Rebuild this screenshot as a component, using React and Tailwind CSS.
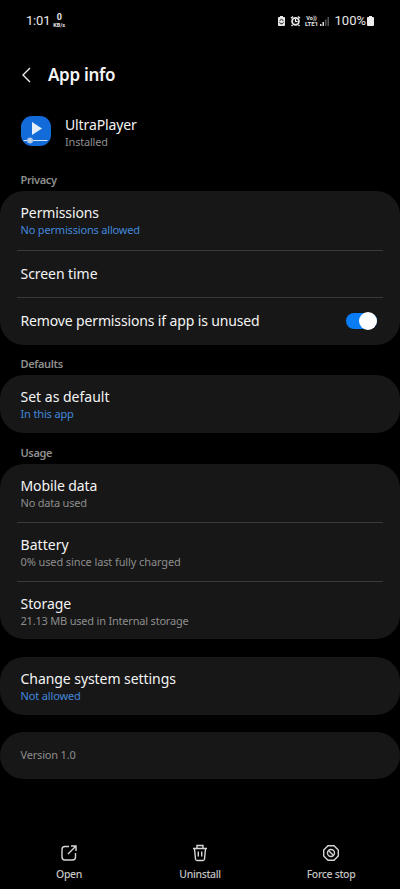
import React from 'react';

function Row({ title, sub, blue, height, tracking = 'tracking-[-0.06px]', subTracking = 'tracking-[-0.15px]', children }) {
  return (
    <div className={`flex items-center justify-between pl-[20.5px] pr-[23px] ${sub ? 'pt-[1px]' : ''} ${height}`}>
      <div className="whitespace-nowrap">
        <div className={`text-[14px] leading-[19px] text-[#f4f4f4] ${tracking}`}>{title}</div>
        {sub && <div className={`text-[11px] leading-[16px] ${blue ? 'text-[#4287dc]' : 'text-[#8d8d8d]'} ${subTracking}`}>{sub}</div>}
      </div>
      {children}
    </div>
  );
}

function Divider() {
  return <div className="mx-[17px] h-px shrink-0 bg-[#383838]" />;
}

function Card({ children, className }) {
  return <section className={`shrink-0 rounded-[24px] bg-[#171717] ${className}`}>{children}</section>;
}

function Heading({ children, className = 'h-[31px] pt-[12px]' }) {
  return <h2 className={`shrink-0 pl-[20.5px] text-[11px] font-semibold leading-[16px] tracking-[-0.35px] text-[#8e8e8e] ${className}`}>{children}</h2>;
}

function Action({ label, children, className }) {
  return (
    <button className={`flex flex-col items-center ${className}`}>
      <svg width="18" height="18" viewBox="0 0 18 18" fill="none" stroke="#d6d6d6" strokeWidth="1.4">{children}</svg>
      <span className="mt-[4px] whitespace-nowrap text-[10.5px] font-medium leading-[16px] tracking-[-0.35px] text-[#c4c4c4]">{label}</span>
    </button>
  );
}

export default function App() {
  return (
    <main className="flex h-[889px] w-[400px] flex-col overflow-hidden bg-black font-['Noto_Sans','Open_Sans',sans-serif]">
      <header className="flex h-[40px] shrink-0 items-center justify-between pl-[26px] pr-[26px] pt-[1px] font-[Roboto,sans-serif] text-[#e8e8e8]">
        <div className="flex items-center gap-[3px]">
          <span className="text-[13px] leading-[16px] tracking-[-0.2px]">1:01</span>
          <span className="flex flex-col items-center font-bold">
            <span className="text-[9px] leading-[9px]">0</span>
            <span className="text-[5.5px] leading-[6px]">KB/s</span>
          </span>
        </div>
        <div className="flex items-center">
          <svg width="9" height="12" viewBox="0 0 9 12" fill="#e8e8e8">
            <path d="M3 1h3v1h1.200q.8 0 .8.8v7.400q0 .8-.8.8H1.800q-.8 0-.8-.8V2.800Q1 2 1.800 2H3z" />
            <path d="M2.600 6.100 4.500 3.900 6.400 6.100M2.500 7.200 3.500 8.700H5.500L6.500 7.200" fill="none" stroke="#111" strokeWidth=".9" />
          </svg>
          <svg className="ml-[4px]" width="11" height="12" viewBox="0 0 11 12" fill="none">
            <path d="M1 3.200 3 1.500M10 3.200 8 1.500M2.500 10 1.500 11M8.500 10 9.500 11" stroke="#e8e8e8" strokeWidth="1.500" />
            <circle cx="5.500" cy="6.300" r="3.500" fill="#222" stroke="#e8e8e8" strokeWidth="1.700" />
            <path d="M5.500 4v2.500h2" stroke="#fff" />
          </svg>
          <span className="ml-[4px] flex w-[14px] flex-col items-center whitespace-nowrap font-bold">
            <span className="text-[5.5px] leading-[6px]">Vo))</span>
            <span className="text-[6px] leading-[6px]">LTE1</span>
          </span>
          <svg className="ml-[1px]" width="10" height="12" viewBox="0 0 10 12" fill="#ddd">
            <path d="M0 9h1.500v2H0zM2.500 7H4v4H2.500z" />
            <path d="M5 4.500h1.500V11H5zM7.500 2H9v9H7.500z" fill="#555" />
          </svg>
          <span className="ml-[5px] text-[13px] leading-[16px]">100%</span>
          <svg className="ml-[1px]" width="7" height="12" viewBox="0 0 7 12" fill="#eee">
            <path d="M2 1h3v1h1q1 0 1 1v7q0 1-1 1H1q-1 0-1-1V3q0-1 1-1h1z" />
          </svg>
        </div>
      </header>

      <div className="flex h-[70px] shrink-0 items-center pl-[21px]">
        <svg width="11" height="17" viewBox="0 0 11 17" fill="none" stroke="#eee" strokeWidth="1.400"><path d="M9 1 2 8l7 7" /></svg>
        <h1 className="ml-[16px] text-[17px] font-semibold leading-[24px] tracking-[-0.3px] text-[#f4f4f4]">App info</h1>
      </div>

      <div className="flex h-[52px] shrink-0 pl-[21px] pt-[6px]">
        <svg width="30" height="30" viewBox="0 0 30 30">
          <rect width="30" height="30" rx="11" fill="#126bd8" />
          <path d="M11 6v13l10-6.500z" fill="#e4edf8" />
          <path d="M2.500 24.500h24" stroke="#d5e4f7" strokeWidth="1" />
          <circle cx="9" cy="24.500" r="3" fill="#a9c5e8" />
          <circle cx="9" cy="24.500" r="1.500" fill="#c9d7e8" />
        </svg>
        <div className="ml-[14px] -mt-[1px]">
          <div className="text-[14px] leading-[19px] tracking-[-0.12px] text-[#f4f4f4]">UltraPlayer</div>
          <div className="text-[11px] leading-[16px] tracking-[-0.2px] text-[#8d8d8d]">Installed</div>
        </div>
      </div>
      <Heading className="h-[29px] pt-[10px]">Privacy</Heading>
      <Card className="h-[153.5px]">
        <Row title="Permissions" sub="No permissions allowed" blue height="h-[58.5px]" tracking="tracking-[-0.12px]" subTracking="tracking-[-0.18px]" />
        <Divider />
        <Row title="Screen time" height="h-[46.5px]" />
        <Divider />
        <Row title="Remove permissions if app is unused" height="h-[45.5px]" tracking="tracking-[-0.14px]">
          <div className="flex h-[16px] w-[31px] items-center justify-end rounded-full bg-[#087cf4]">
            <div className="h-[18px] w-[18px] shrink-0 rounded-full bg-white" />
          </div>
        </Row>
      </Card>
      <Heading className="h-[30.5px] pt-[11.500px]">Defaults</Heading>
      <Card className="h-[58px]">
        <Row title="Set as default" sub="In this app" blue height="h-[58px]" tracking="tracking-normal" />
      </Card>
      <Heading>Usage</Heading>
      <Card className="h-[175px]">
        <Row title="Mobile data" sub="No data used" height="h-[58px]" tracking="tracking-[-0.1px]" subTracking="tracking-[-0.22px]" />
        <Divider />
        <Row title="Battery" sub="0% used since last fully charged" height="h-[58px]" tracking="tracking-[0.06px]" subTracking="tracking-[-0.11px]" />
        <Divider />
        <Row title="Storage" sub="21.13 MB used in Internal storage" height="h-[57px]" subTracking="tracking-[-0.2px]" />
      </Card>
      <Card className="mt-[17.500px] h-[58px]">
        <Row title="Change system settings" sub="Not allowed" blue height="h-[58px]" />
      </Card>
      <Card className="mt-[17px] flex h-[47px] items-center pl-[20.5px]">
        <span className="text-[11px] leading-[16px] tracking-[-0.18px] text-[#8d8d8d]">Version 1.0</span>
      </Card>

      <nav className="mt-[65.500px] flex shrink-0 justify-between pl-[4px] pr-[4px]">
        <Action label="Open" className="w-[130px]">
          <path d="M9 2.500H5q-3 0-3 3V13q0 3 3 3h7.500q3 0 3-3V9M8 10l7.500-7.500M11 2h5v5" />
        </Action>
        <Action label="Uninstall" className="w-[130px]">
          <path d="M2 4.500h14M6 4V1.500h6V4M3.500 5l1 10q.2 1.500 1.500 1.500h6q1.300 0 1.500-1.500l1-10M7.300 7.500v5M10.700 7.500v5" />
        </Action>
        <Action label="Force stop" className="w-[130px]">
          <path d="M6 1.700h6L16.300 6v6L12 16.300H6L1.700 12V6z" />
          <circle cx="9" cy="9" r="3.500" />
          <path d="m6.700 6.700 4.600 4.600" />
        </Action>
      </nav>
    </main>
  );
}
